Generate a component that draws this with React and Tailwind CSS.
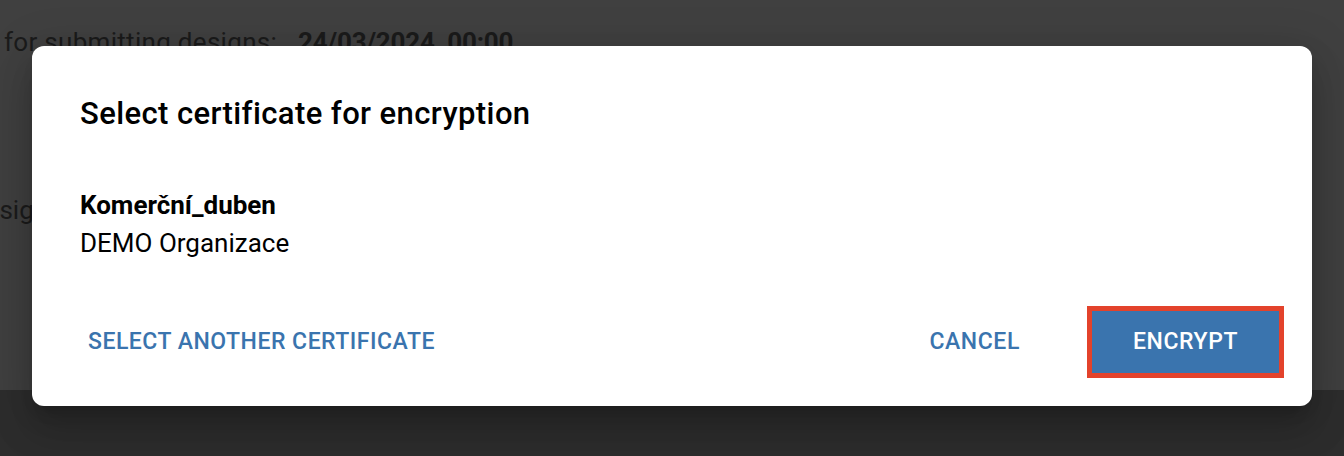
export default function App() {
  const font = { fontFamily: 'Roboto, "Liberation Sans", sans-serif' };
  return (
    <div className="relative w-[1344px] h-[456px] overflow-hidden" style={font}>
      {/* background page (dimmed) */}
      <div className="flex flex-col h-full">
        <div className="h-[390px] bg-[#404040]">
          <div className="flex items-baseline pt-[24px] pl-[4px] text-[26px] leading-[36px] text-[#1b1b1b] whitespace-nowrap">
            <span className="tracking-[0.3px]">for submitting designs:</span>
            <span className="ml-[21px] font-bold tracking-[-0.2px]">24/03/2024&nbsp;&nbsp;00:00</span>
          </div>
          <div className="mt-[132px] -ml-[29px] text-[26px] leading-[36px] text-[#1b1b1b] whitespace-nowrap">
            <span>designs</span>
          </div>
        </div>
        <div className="flex-1 bg-[#2d2d2d]" />
      </div>

      {/* dialog */}
      <div className="absolute left-[32px] top-[46px] w-[1280px] h-[360px] bg-white rounded-[12px] flex flex-col shadow-[0_11px_15px_-7px_rgba(0,0,0,0.2),0_24px_38px_3px_rgba(0,0,0,0.14),0_9px_46px_8px_rgba(0,0,0,0.12)]">
        <h2 className="pl-[48px] pt-[48px] text-[31px] leading-[40px] font-medium text-black tracking-[0.4px]">
          Select certificate for encryption
        </h2>
        <div className="pl-[48px] mt-[52px] text-[26px] leading-[38px] text-black">
          <div className="font-bold">Komerční_duben</div>
          <div>DEMO Organizace</div>
        </div>
        <div className="mt-auto pb-[28px] pl-[48px] pr-[28px] flex items-center">
          <button className="px-[8px] text-[23px] font-medium tracking-[0.5px] text-[#3a74ae] uppercase">
            Select another certificate
          </button>
          <div className="flex-1" />
          <button className="mr-[67px] text-[23px] font-medium tracking-[0.6px] text-[#3a74ae] uppercase">
            Cancel
          </button>
          <button className="w-[197px] h-[72px] border-[5px] border-[#e3422b] bg-[#3a74ae] text-white text-[23px] font-medium tracking-[0.6px] uppercase flex items-center justify-center">
            Encrypt
          </button>
        </div>
      </div>
    </div>
  );
}
